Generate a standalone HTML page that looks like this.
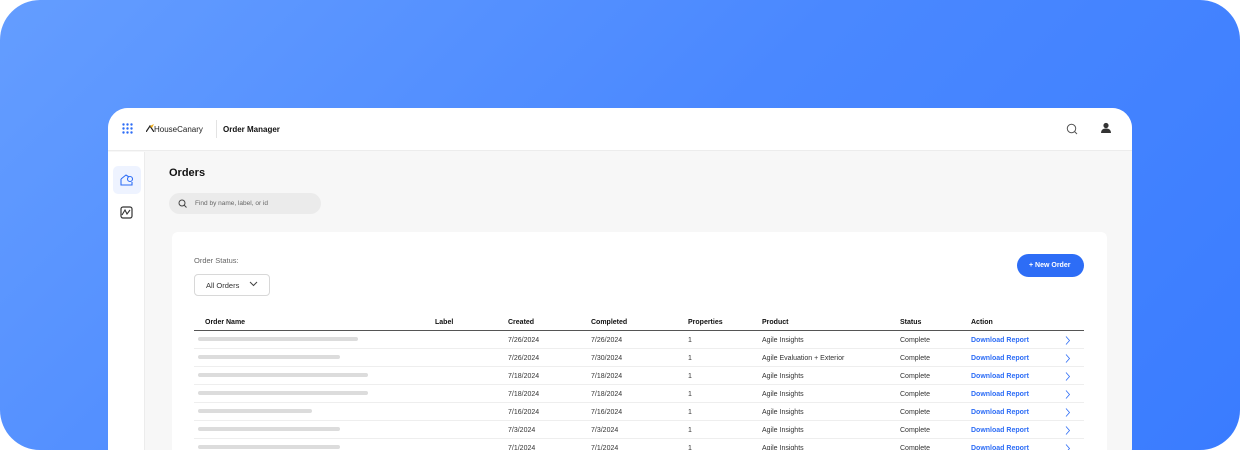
<!DOCTYPE html>
<html><head><style>
*{margin:0;padding:0;box-sizing:border-box}
body{width:1240px;height:450px;overflow:hidden;background:#fff;font-family:"Liberation Sans",sans-serif}
.bg{position:absolute;left:0;top:0;width:1240px;height:450px;border-radius:40px;background:linear-gradient(135deg,#649dff 0%,#4a88ff 50%,#3a7cff 100%);overflow:hidden}
.win{position:absolute;left:108px;top:108px;width:1024px;height:360px;background:#f7f7f7;border-radius:20px;overflow:hidden}
.hdr{position:absolute;left:0;top:0;width:100%;height:43px;background:#fff;border-bottom:1px solid #ececec}
.side{position:absolute;left:0;top:44px;width:37px;height:320px;background:#fff;border-right:1px solid #ececec}
.t{position:absolute;font-size:7px;color:#333;white-space:nowrap}
.h{font-weight:bold;color:#111}
.bar{position:absolute;height:4px;border-radius:2px;background:#dcdcdc}
.line{position:absolute;left:86px;width:890px;height:1px;background:#eee}
.dl{color:#2d6df6;font-weight:bold}
</style></head><body>
<div class="bg">
<div class="win">
 <div class="hdr">
  <svg style="position:absolute;left:14px;top:15px" width="11" height="11">
   <g fill="#2d6df6"><circle cx="1.5" cy="1.5" r="1.2"/><circle cx="5.5" cy="1.5" r="1.2"/><circle cx="9.5" cy="1.5" r="1.2"/><circle cx="1.5" cy="5.5" r="1.2"/><circle cx="5.5" cy="5.5" r="1.2"/><circle cx="9.5" cy="5.5" r="1.2"/><circle cx="1.5" cy="9.5" r="1.2"/><circle cx="5.5" cy="9.5" r="1.2"/><circle cx="9.5" cy="9.5" r="1.2"/></g></svg>
  <svg style="position:absolute;left:38px;top:16px" width="8" height="8"><path d="M0 8 L4 2 L8 8" stroke="#222" fill="none" stroke-width="1.2"/><path d="M4 2 L8 0 L6 4Z" fill="#f2b01e"/></svg>
  <div class="t" style="left:46px;top:17px;font-size:8px;color:#222">HouseCanary</div>
  <div style="position:absolute;left:108px;top:12px;width:1px;height:18px;background:#e3e3e3"></div>
  <div class="t h" style="left:115px;top:17px;font-size:8px">Order Manager</div>
  <svg style="position:absolute;left:958px;top:15px" width="12" height="12"><circle cx="5.5" cy="5.5" r="4.2" stroke="#555" stroke-width="1" fill="none"/><path d="M8.5 8.5 L11 11" stroke="#555" stroke-width="1"/></svg>
  <svg style="position:absolute;left:992px;top:14px" width="12" height="12"><circle cx="6" cy="3.5" r="2.6" fill="#333"/><path d="M1 11 Q1 6.5 6 6.5 Q11 6.5 11 11Z" fill="#333"/></svg>
 </div>
 <div class="side">
  <div style="position:absolute;left:5px;top:14px;width:28px;height:28px;border-radius:5px;background:#eef3ff"></div>
  <svg style="position:absolute;left:12px;top:21px" width="14" height="14"><path d="M1 6 L6 2 L9 4 M1 6 V12 H12 V9" stroke="#2d6df6" fill="none" stroke-width="1.1"/><circle cx="10" cy="6" r="2.5" stroke="#2d6df6" fill="none" stroke-width="1.1"/></svg>
  <svg style="position:absolute;left:12px;top:54px" width="13" height="13"><rect x="1" y="1" width="11" height="11" rx="2" stroke="#333" fill="none" stroke-width="1.2"/><path d="M2 9 L5 4 L7 8 L10 4" stroke="#333" fill="none" stroke-width="1.1"/></svg>
 </div>
 <div class="t h" style="left:61px;top:59px;font-size:11px">Orders</div>
 <div style="position:absolute;left:61px;top:85px;width:152px;height:21px;border-radius:11px;background:#ebebeb"></div>
 <svg style="position:absolute;left:70px;top:91px" width="9" height="9"><circle cx="4" cy="4" r="3" stroke="#444" fill="none"/><path d="M6 6 L8.5 8.5" stroke="#444"/></svg>
 <div class="t" style="left:87px;top:92px;font-size:6.5px;color:#666">Find by name, label, or id</div>
 <div style="position:absolute;left:64px;top:124px;width:935px;height:240px;background:#fff;border-radius:6px"></div>
 <div class="t" style="left:86px;top:148px;font-size:7.5px;color:#666">Order Status:</div>
 <div style="position:absolute;left:86px;top:166px;width:76px;height:22px;border:1px solid #d8d8d8;border-radius:4px;background:#fff"></div>
 <div class="t" style="left:98px;top:173px;font-size:7.5px">All Orders</div>
 <svg style="position:absolute;left:141px;top:173px" width="9" height="6"><path d="M1 1 L4.5 4.5 L8 1" stroke="#444" fill="none"/></svg>
 <div style="position:absolute;left:909px;top:146px;width:67px;height:23px;border-radius:12px;background:#2d6df6"></div>
 <div class="t" style="left:921px;top:154px;font-size:7px;color:#fff;font-weight:bold">+ New Order</div>
 <div class="t h" style="left:97px;top:211px">Order Name</div>
 <div class="t h" style="left:327px;top:211px">Label</div>
 <div class="t h" style="left:400px;top:211px">Created</div>
 <div class="t h" style="left:483px;top:211px">Completed</div>
 <div class="t h" style="left:580px;top:211px">Properties</div>
 <div class="t h" style="left:654px;top:211px">Product</div>
 <div class="t h" style="left:792px;top:211px">Status</div>
 <div class="t h" style="left:863px;top:211px">Action</div>
 <div style="position:absolute;left:86px;top:222px;width:890px;height:1px;background:#555"></div>
 <div id="rows"></div>
</div>
</div>
<script>
var d=[[160,"7/26/2024","7/26/2024","Agile Insights"],[142,"7/26/2024","7/30/2024","Agile Evaluation + Exterior"],[170,"7/18/2024","7/18/2024","Agile Insights"],[170,"7/18/2024","7/18/2024","Agile Insights"],[114,"7/16/2024","7/16/2024","Agile Insights"],[142,"7/3/2024","7/3/2024","Agile Insights"],[142,"7/1/2024","7/1/2024","Agile Insights"]];
var h="";d.forEach(function(r,i){var y=229+i*18;
h+='<div class="bar" style="left:90px;top:'+(y)+'px;width:'+r[0]+'px"></div>'+
'<div class="t" style="left:400px;top:'+y+'px">'+r[1]+'</div><div class="t" style="left:483px;top:'+y+'px">'+r[2]+'</div>'+
'<div class="t" style="left:580px;top:'+y+'px">1</div><div class="t" style="left:654px;top:'+y+'px">'+r[3]+'</div>'+
'<div class="t" style="left:792px;top:'+y+'px">Complete</div><div class="t dl" style="left:863px;top:'+y+'px">Download Report</div>'+
'<svg style="position:absolute;left:957px;top:'+(y-1)+'px" width="6" height="9"><path d="M1 0.5 L4.5 4.5 L1 8.5" stroke="#2d6df6" stroke-width="0.8" fill="none"/></svg>'+
'<div class="line" style="top:'+(y+11)+'px"></div>';});
document.getElementById("rows").outerHTML=h;
</script>
</body></html>
